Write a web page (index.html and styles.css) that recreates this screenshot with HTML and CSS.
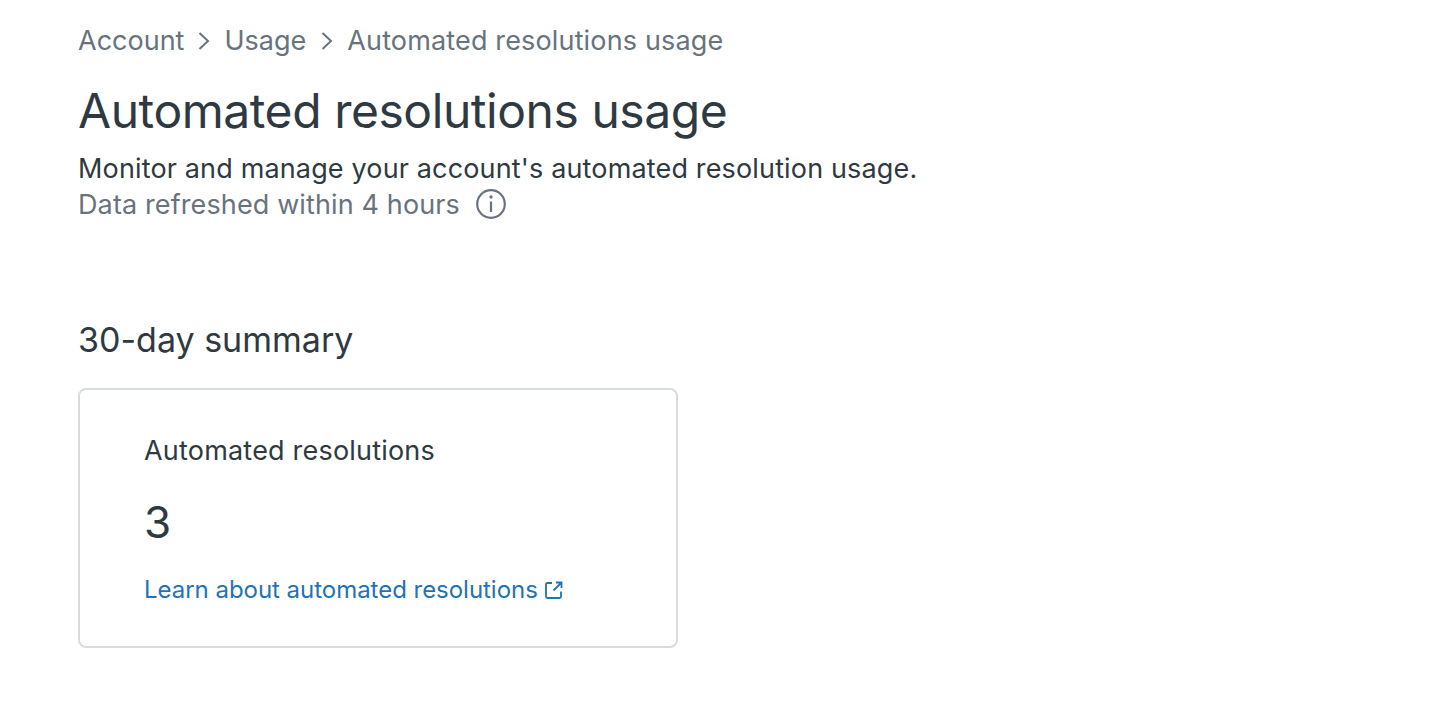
FILE: index.html
```html
<!DOCTYPE html>
<html lang="en">

<head>
    <meta charset="UTF-8">
    <title>Automated resolutions usage</title>
    <link rel="stylesheet" href="styles.css">
</head>

<body>
    <div class="page">
        <nav class="breadcrumb">
            <span>Account</span>
            <svg class="chevron" viewBox="0 0 12 18" width="12" height="18"><path d="M1.5 1 L10 9 L1.5 17" /></svg>
            <span class="usage">Usage</span>
            <svg class="chevron" viewBox="0 0 12 18" width="12" height="18"><path d="M1.5 1 L10 9 L1.5 17" /></svg>
            <span class="current">Automated resolutions usage</span>
        </nav>

        <h1>Automated resolutions usage</h1>
        <p class="subtitle">Monitor and manage your account's automated resolution usage.</p>
        <div class="refresh">
            <span>Data refreshed within 4 hours</span>
            <svg class="info" viewBox="0 0 30 30" width="30" height="30">
                <circle cx="15" cy="15" r="13.8" />
                <path d="M15 12.5 V23" />
                <circle class="dot" cx="15" cy="8" r="1.7" />
            </svg>
        </div>

        <h2>30-day summary</h2>
        <div class="card">
            <div class="card-title">Automated resolutions</div>
            <div class="card-value">3</div>
            <a class="card-link" href="#">Learn about automated resolutions
                <svg class="external" viewBox="0 0 18 18" width="18" height="18">
                    <path d="M7 2 H2.5 Q1 2 1 3.5 V15.5 Q1 17 2.5 17 H14.5 Q16 17 16 15.5 V10.5" />
                    <path d="M11 1.5 H16.5 V7 M16.5 1.5 L8.5 9.5" />
                </svg>
            </a>
        </div>
    </div>
</body>

</html>
```

FILE: styles.css
```css
body {
    font-family: 'Inter', 'Liberation Sans', sans-serif;
    background-color: #fff;
    color: #2f3941;
    margin: 0;
    padding: 0;
}

.page {
    padding: 23px 0 0 78px;
}

.breadcrumb {
    display: flex;
    align-items: center;
    gap: 14px;
    font-size: 27px;
    line-height: 36px;
    color: #68737d;
}

.breadcrumb .usage {
    margin-right: 1px;
}

.breadcrumb .current {
    letter-spacing: 0.15px;
}

.chevron path {
    fill: none;
    stroke: #68737d;
    stroke-width: 2;
}

h1 {
    font-size: 48px;
    font-weight: 400;
    line-height: 60px;
    letter-spacing: -0.45px;
    margin: 22px 0 0;
}

.subtitle {
    font-size: 27px;
    line-height: 36px;
    letter-spacing: 0.15px;
    margin: 10px 0 0;
}

.refresh {
    display: flex;
    align-items: center;
    gap: 16px;
    font-size: 27px;
    line-height: 36px;
    letter-spacing: 0.12px;
    color: #68737d;
}

.info {
    margin-bottom: 2px;
}

.info circle {
    fill: none;
    stroke: #68737d;
    stroke-width: 2.2;
}

.info path {
    fill: none;
    stroke: #68737d;
    stroke-width: 2.2;
}

.info .dot {
    fill: #68737d;
    stroke: none;
}

h2 {
    font-size: 34px;
    font-weight: 400;
    line-height: 44px;
    margin: 95px 0 0;
}

.card {
    box-sizing: border-box;
    width: 600px;
    height: 260px;
    margin-top: 26px;
    padding: 43px 64px;
    border: 2px solid #d8dcde;
    border-radius: 8px;
}

.card-title {
    font-size: 27px;
    line-height: 36px;
    letter-spacing: 0.2px;
}

.card-value {
    font-size: 44px;
    line-height: 56px;
    margin-top: 25px;
}

.card-link {
    display: flex;
    align-items: center;
    gap: 7px;
    margin-top: 24px;
    font-size: 24px;
    line-height: 32px;
    letter-spacing: -0.03px;
    color: #1f73b7;
    text-decoration: none;
}

.external path {
    fill: none;
    stroke: #1f73b7;
    stroke-width: 1.8;
}
```
